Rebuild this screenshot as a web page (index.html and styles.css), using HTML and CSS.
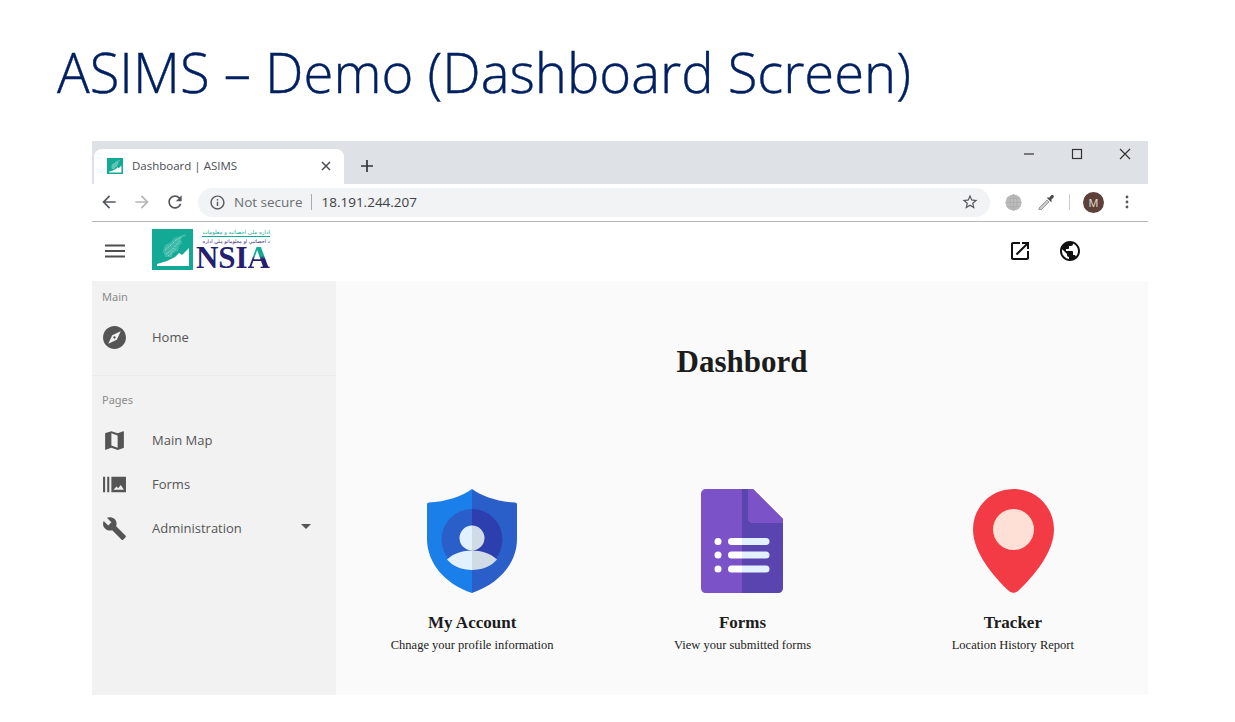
FILE: index.html
```html
<!DOCTYPE html>
<html lang="en">
<head>
<meta charset="utf-8">
<title>ASIMS – Demo (Dashboard Screen)</title>
<link rel="stylesheet" href="styles.css">
</head>
<body>
<main class="slide">
  <h1 class="slide-title">ASIMS – Demo (Dashboard Screen)</h1>
  <section class="browser">
    <div class="tabstrip">
      <div class="tab">
        <svg class="favicon" viewBox="0 0 41 41"><rect width="41" height="41" fill="#12a995"/><path d="M5 37v-2l10-3 8-4 4-4 3 2 7-7v18z" fill="#fff"/><path d="M11 22l2-6 6-3 3-4 6-2 5-2 1 2-5 2 1 5-3 3-1 5-5 2-1 4h-7z" fill="#5fc4b4"/></svg>
        <span class="tab-title">Dashboard | ASIMS</span>
        <svg class="tab-close" viewBox="0 0 10 10"><path d="M1 1l8 8M9 1l-8 8" stroke="#4a4d52" stroke-width="1.5"/></svg>
      </div>
      <svg class="newtab" viewBox="0 0 12 12"><path d="M6 0v12M0 6h12" stroke="#35373a" stroke-width="1.7"/></svg>
      <div class="winctrls">
        <svg class="winctrl" viewBox="0 0 12 12"><path d="M1 6h10" stroke="#333" stroke-width="1.2"/></svg>
        <svg class="winctrl" viewBox="0 0 12 12"><rect x="1.500" y="1.500" width="9" height="9" fill="none" stroke="#333" stroke-width="1.200"/></svg>
        <svg class="winctrl" viewBox="0 0 12 12"><path d="M1 1l10 10M11 1L1 11" stroke="#333" stroke-width="1.200"/></svg>
      </div>
    </div>

    <div class="toolbar">
      <svg class="nav-icon" viewBox="0 0 24 24"><path fill="#55585c" d="M20 11H7.830l5.590-5.590L12 4l-8 8 8 8 1.410-1.410L7.830 13H20v-2z"/></svg>
      <svg class="nav-icon" viewBox="0 0 24 24"><path fill="#b4b6b9" d="M4 11h12.170l-5.590-5.590L12 4l8 8-8 8-1.410-1.410L16.170 13H4v-2z"/></svg>
      <svg class="nav-icon" viewBox="0 0 24 24"><path fill="#55585c" d="M17.650 6.350C16.200 4.900 14.210 4 12 4c-4.420 0-7.990 3.580-7.990 8s3.570 8 7.990 8c3.730 0 6.840-2.550 7.730-6h-2.080c-.82 2.330-3.040 4-5.650 4-3.310 0-6-2.690-6-6s2.690-6 6-6c1.660 0 3.140.69 4.220 1.780L13 11h7V4l-2.350 2.350z"/></svg>
      <div class="omnibox">
        <svg class="omni-info" viewBox="0 0 24 24"><path fill="#55585c" d="M11 7h2v2h-2zm0 4h2v6h-2zm1-9C6.480 2 2 6.480 2 12s4.480 10 10 10 10-4.480 10-10S17.520 2 12 2zm0 18c-4.410 0-8-3.590-8-8s3.590-8 8-8 8 3.590 8 8-3.590 8-8 8z"/></svg>
        <span class="omni-secure">Not secure</span>
        <span class="omni-sep"></span>
        <span class="omni-url">18.191.244.207</span>
        <svg class="omni-star" viewBox="0 0 24 24"><path fill="#55585c" d="M22 9.240l-7.190-.62L12 2 9.190 8.630 2 9.240l5.460 4.730L5.820 21 12 17.270 18.180 21l-1.630-7.030L22 9.240zM12 15.400l-3.760 2.270 1-4.280-3.320-2.880 4.380-.38L12 6.100l1.710 4.040 4.380.38-3.320 2.880 1 4.280L12 15.400z"/></svg>
      </div>
      <svg class="ext-globe" viewBox="0 0 18 18"><circle cx="9" cy="9" r="8.500" fill="#bcbcbc"/><path d="M.5 9h17M9 .5v17M2 4.500h14M2 13.500h14M9 .5c-5 4-5 13 0 17M9 .5c5 4 5 13 0 17" fill="none" stroke="#a8a8a8" stroke-width=".7"/></svg>
      <svg class="ext-pipette" viewBox="0 0 18 18"><path d="M2 16l-1 1 0-2 8-8 2 2-8 8z" fill="#c9c9c9" stroke="#8d8d8d" stroke-width=".8"/><path d="M9 5l4 4 1-1-1-1 2.500-2.500c1-1 0-3-1.500-2.500-.5.100-1 .5-1 .5L11 5l-1-1z" fill="#4a4a4a"/></svg>
      <span class="toolbar-sep"></span>
      <span class="avatar">M</span>
      <svg class="menu-dots" viewBox="0 0 4 14"><circle cx="2" cy="2" r="1.400" fill="#55585c"/><circle cx="2" cy="7" r="1.400" fill="#55585c"/><circle cx="2" cy="12" r="1.400" fill="#55585c"/></svg>
    </div>

    <header class="appbar">
      <svg class="hamburger" viewBox="0 0 20 14"><path d="M0 1.500h20M0 7h20M0 12.500h20" stroke="#4f4f4f" stroke-width="1.800"/></svg>
      <div class="logo">
        <svg class="logo-mark" viewBox="0 0 41 41">
          <rect width="41" height="41" fill="#12a995"/>
          <path d="M5 37v-2l10-3 8-4 4-4 3 2 7-7v18z" fill="#fff"/>
          <path d="M11 22l2-6 6-3 3-4 6-2 5-2 1 2-5 2 1 5-3 3-1 5-5 2-1 4h-7z" fill="#3dbaa8"/>
          <path d="M13 21l6-5 5-5 6-3M14 25l6-4 5-6 3-4M16 27l4-3 4-5" fill="none" stroke="#cfece7" stroke-width=".8" stroke-dasharray="1 1.200"/>
        </svg>
        <div class="logo-type">
          <span class="logo-ar logo-ar-top" lang="fa">اداره ملی احصائیه و معلومات</span>
          <span class="logo-ar logo-ar-sub" lang="ps">د احصائیې او معلوماتو ملي اداره</span>
          <span class="logo-name">NSI<span class="logo-a">A</span></span>
        </div>
      </div>
      <div class="appbar-actions">
        <svg class="appbar-icon" viewBox="0 0 24 24"><path d="M19 19H5V5h7V3H5c-1.110 0-2 .9-2 2v14c0 1.100.89 2 2 2h14c1.100 0 2-.9 2-2v-7h-2v7zM14 3v2h3.590l-9.830 9.830 1.410 1.410L19 6.410V10h2V3h-7z"/></svg>
        <svg class="appbar-icon" viewBox="0 0 24 24"><path d="M12 2C6.480 2 2 6.480 2 12s4.480 10 10 10 10-4.480 10-10S17.520 2 12 2zm-1 17.930c-3.950-.49-7-3.850-7-7.930 0-.62.08-1.210.21-1.790L9 15v1c0 1.100.9 2 2 2v1.930zm6.900-2.540c-.26-.81-1-1.390-1.900-1.390h-1v-3c0-.55-.45-1-1-1H8v-2h2c.55 0 1-.45 1-1V7h2c1.100 0 2-.9 2-2v-.41c2.930 1.190 5 4.060 5 7.410 0 2.080-.8 3.970-2.100 5.390z"/></svg>
      </div>
    </header>

    <div class="app-body">
      <nav class="sidebar">
        <div class="nav-group nav-group-main">
          <div class="nav-label">Main</div>
          <a class="nav-item">
            <svg class="nav-svg" viewBox="0 0 24 24"><path d="M12 10.900c-.61 0-1.100.49-1.100 1.100s.49 1.100 1.100 1.100c.61 0 1.100-.49 1.100-1.100s-.49-1.100-1.100-1.100zM12 1C5.920 1 1 5.920 1 12s4.920 11 11 11 11-4.920 11-11S18.080 1 12 1zm2.190 13.190L6 18l3.810-8.190L18 6l-3.810 8.190z"/></svg>
            <span>Home</span>
          </a>
        </div>
        <div class="nav-group">
          <div class="nav-label">Pages</div>
          <a class="nav-item">
            <svg class="nav-svg" viewBox="0 0 24 24"><path d="M20.500 3l-.16.03L15 5.100 9 3 3.360 4.900c-.21.07-.36.25-.36.48V20.500c0 .28.22.5.5.5l.16-.03L9 18.900l6 2.100 5.640-1.900c.21-.07.36-.25.36-.48V3.500c0-.28-.22-.5-.5-.5zM15 19l-6-2.110V5l6 2.110V19z"/></svg>
            <span>Main Map</span>
          </a>
          <a class="nav-item">
            <svg class="nav-svg" viewBox="0 0 24 24"><path d="M1 4.500h2v15H1zM5 4.500h2v15H5zM9 4.500h14v15H9zM11 17h10l-3-4.500-2.500 3-1.500-1.500z" fill-rule="evenodd"/></svg>
            <span>Forms</span>
          </a>
          <a class="nav-item">
            <svg class="nav-svg" viewBox="0 0 24 24"><path d="M22.700 19l-9.100-9.100c.9-2.300.4-5-1.500-6.900-2-2-5-2.400-7.400-1.300L9 6 6 9 1.600 4.700C.4 7.100.9 10.100 2.900 12.100c1.900 1.900 4.600 2.400 6.900 1.500l9.100 9.100c.4.4 1 .4 1.400 0l2.300-2.300c.5-.4.5-1.100.1-1.400z"/></svg>
            <span class="nav-grow">Administration</span>
            <span class="caret"></span>
          </a>
        </div>
      </nav>

      <div class="content">
        <h2 class="content-title">Dashbord</h2>
        <div class="cards">
          <article class="card">
            <svg class="card-icon" viewBox="0 0 90 104" width="90" height="104">
              <path d="M45 0C36 7 18 13 2 13.500 .8 13.600 0 14.400 0 15.500V50c0 24 18 45 45 54z" fill="#1a7fe8"/>
              <path d="M45 0c9 7 27 13 43 13.500 1.200.1 2 .9 2 2V50c0 24-18 45-45 54z" fill="#2a5fca"/>
              <path d="M45 20a30.500 30.500 0 0 0 0 61z" fill="#2a5fca"/>
              <path d="M45 20a30.500 30.500 0 0 1 0 61z" fill="#2d3eae"/>
              <path d="M45 36.500a12.500 12.500 0 0 0 0 25c-9 0-19 3-25 9 5.500 6.500 15 10.500 25 10.500z" fill="#e3f0fd"/>
              <path d="M45 36.500a12.500 12.500 0 0 1 0 25c9 0 19 3 25 9-5.500 6.500-15 10.500-25 10.500z" fill="#d0dbe8"/>
            </svg>
            <h3 class="card-title">My Account</h3>
            <p class="card-text">Chnage your profile information</p>
          </article>
          <article class="card">
            <svg class="card-icon" viewBox="0 0 82 104" width="82" height="104">
              <path d="M41 0H5C2 0 0 2 0 5v94c0 3 2 5 5 5h36z" fill="#7c52c8"/>
              <path d="M41 0h11l30 30v69c0 3-2 5-5 5H41z" fill="#5a45b0"/>
              <path d="M47 0h5l30 30v4H51c-2 0-4-2-4-4z" fill="#7c52c8"/>
              <circle cx="17" cy="52.500" r="3.500" fill="#fff"/><circle cx="17" cy="66" r="3.500" fill="#fff"/><circle cx="17" cy="80" r="3.500" fill="#fff"/>
              <path d="M41 49H30.500a3.500 3.500 0 0 0 0 7H41zM41 62.500H30.500a3.500 3.500 0 0 0 0 7H41zM41 76.500H30.500a3.500 3.500 0 0 0 0 7H41z" fill="#fff"/>
              <path d="M41 49H65a3.500 3.500 0 0 1 0 7H41zM41 62.500H65a3.500 3.500 0 0 1 0 7H41zM41 76.500H65a3.500 3.500 0 0 1 0 7H41z" fill="#e3f0fd"/>
            </svg>
            <h3 class="card-title">Forms</h3>
            <p class="card-text">View your submitted forms</p>
          </article>
          <article class="card">
            <svg class="card-icon card-icon-pin" viewBox="0 0 81 104" width="81" height="104">
              <path d="M40.500 0C18 0 0 18 0 40.500 0 63 20 87 35.500 101.500c3 3 7 3 10 0C61 87 81 63 81 40.500 81 18 63 0 40.500 0z" fill="#f23b45"/>
              <circle cx="40.500" cy="40.500" r="20.500" fill="#ffe0d6"/>
            </svg>
            <h3 class="card-title">Tracker</h3>
            <p class="card-text">Location History Report</p>
          </article>
        </div>
      </div>
    </div>
  </section>
</main>
</body>
</html>
```

FILE: styles.css
```css
* { box-sizing: border-box; }
html, body { margin: 0; padding: 0; background: #fff; }
body { width: 1235px; height: 722px; overflow: hidden; }
svg { display: block; flex: none; }

.slide { padding: 36px 87px 0 92px; }
.slide-title {
  margin: 0 0 32px -35px;
  height: 73px;
  font: 300 54.400px/73px "Open Sans", sans-serif;
  -webkit-text-stroke: 0.4px #002060;
  color: #002060;
  white-space: nowrap;
}

.browser { width: 1056px; height: 554px; display: flex; flex-direction: column; font-family: "Noto Sans", sans-serif; }

.tabstrip { height: 43px; background: #dee1e6; display: flex; align-items: flex-end; padding-left: 2px; }
.tab { width: 250px; height: 35px; background: #fff; border-radius: 8px 8px 0 0; display: flex; align-items: center; padding: 0 12px 2px 13px; }
.favicon { width: 16px; height: 16px; }
.tab-title { margin-left: 9px; flex: 1; font: 11.500px "Open Sans", sans-serif; color: #4a4d52; }
.tab-close { width: 10px; height: 10px; margin-right: 1px; }
.newtab { width: 12px; height: 12px; margin: 0 0 12px 17px; }
.winctrls { margin-left: auto; align-self: flex-start; display: flex; gap: 36px; padding: 7px 17px 0 0; }
.winctrl { width: 12px; height: 12px; }

.toolbar { height: 38px; background: #fff; border-bottom: 1px solid #b4b6b9; display: flex; align-items: center; padding: 0 0 1px 7px; }
.nav-icon { width: 20px; height: 20px; margin-right: 13px; }
.omnibox { width: 792px; height: 29px; border-radius: 15px; background: #f1f3f4; display: flex; align-items: center; padding: 0 11px; }
.omni-info { width: 17px; height: 17px; }
.omni-secure { margin-left: 8px; font: 13.500px "Open Sans", sans-serif; color: #6b6e72; }
.omni-sep { width: 1px; height: 16px; background: #a8aaad; margin: 0 9px; }
.omni-url { flex: 1; font: 13.500px "Open Sans", sans-serif; color: #3c4043; }
.omni-star { width: 18px; height: 18px; }
.ext-globe { width: 17px; height: 17px; margin-left: 15px; }
.ext-pipette { width: 18px; height: 18px; margin-left: 16px; }
.toolbar-sep { width: 1px; height: 16px; background: #c9cbce; margin-left: 13px; }
.avatar { width: 21px; height: 21px; border-radius: 50%; background: #5d4037; color: #e8e0dc; font: 11px/21px "Open Sans", sans-serif; text-align: center; margin-left: 13px; }
.menu-dots { width: 4px; height: 14px; margin-left: 21px; }

.appbar { height: 59px; background: #fff; display: flex; align-items: center; padding: 0 66px 1px 13px; }
.hamburger { width: 20px; height: 14px; }
.logo { margin-left: 27px; display: flex; gap: 3px; height: 41px; margin-top: -3px; }
.logo-mark { width: 41px; height: 41px; }
.logo-type { width: 74px; display: flex; flex-direction: column; align-items: flex-end; }
.logo-ar { font: 5.500px/7px "DejaVu Sans", sans-serif; color: #2f2a7a; white-space: nowrap; }
.logo-ar-top { color: #12a995; border-bottom: 1px solid #12a995; }
.logo-ar-sub { font-size: 5px; line-height: 8px; }
.logo-name { font: 700 31px/26px "Liberation Serif", serif; color: #241f6e; }
.logo-a { background: linear-gradient(#12a995 45%, #241f6e 55%); -webkit-background-clip: text; background-clip: text; color: transparent; }
.appbar-actions { margin-left: auto; display: flex; gap: 26px; }
.appbar-icon { width: 24px; height: 24px; fill: #111; }

.app-body { flex: 1; display: flex; min-height: 0; }
.sidebar { width: 244px; background: #f2f2f2; }
.nav-group { padding: 9px 0 0 10px; }
.nav-group-main { height: 95px; border-bottom: 1px solid #ececec; }
.nav-group + .nav-group { padding-top: 17px; }
.nav-label { font-size: 11px; line-height: 13px; color: #8b8b8b; margin-bottom: 12px; }
.nav-item { height: 44px; display: flex; align-items: center; font: 13px "Open Sans", sans-serif; color: #555; padding-right: 25px; }
.nav-svg { width: 25px; height: 25px; fill: #555; margin-right: 25px; }
.nav-grow { flex: 1; }
.caret { width: 0; height: 0; border: 5px solid transparent; border-top-color: #555; border-bottom: 0; margin-bottom: 4px; }

.content { flex: 1; background: #fafafa; padding-top: 64px; font-family: "Liberation Serif", serif; color: #1c1c1c; }
.content-title { margin: 0 0 110px; font: 700 31px/34px "Liberation Serif", serif; text-align: center; }
.cards { display: grid; grid-template-columns: repeat(3, 1fr); padding-left: 1px; }
.card { display: flex; flex-direction: column; align-items: center; }
.card-icon-pin { margin-left: 2px; }
.card-title { margin: 19px 0 0; font: 700 17px/22px "Liberation Serif", serif; }
.card-text { margin: 2px 0 0; font: 12.500px/18px "Liberation Serif", serif; }
```
